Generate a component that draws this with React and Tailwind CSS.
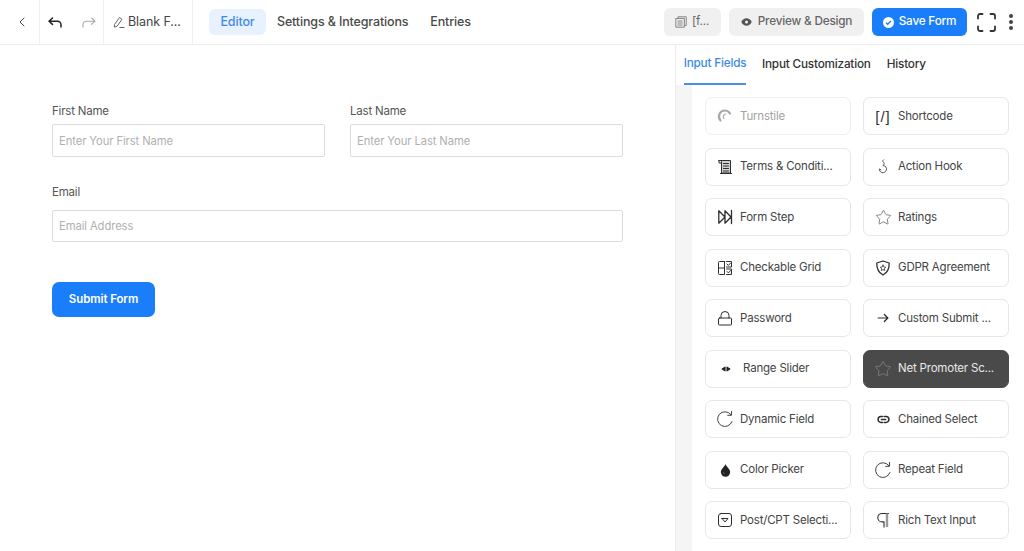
import React from "react";
import { ChevronLeft, Star } from "lucide-react";

const S = ({ children, size = 18, className = "", sw = 1.2 }) => (
  <svg width={size} height={size} viewBox="0 0 18 18" fill="none" stroke="currentColor" strokeWidth={sw} strokeLinecap="round" strokeLinejoin="round" className={className}>{children}</svg>
);

const TurnstileIcon = () => (
  <S sw={2.2}><path d="M4.500 13.500A6 6 0 0 1 9 3.500c2.200 0 3.900 1.100 5 3" /><path d="M7.800 11.500A3 3 0 0 1 9.500 7" strokeWidth="1.200" /></S>
);
const ShortcodeIcon = () => (
  <span className="text-[15px] leading-none tracking-[1px] text-[#333] font-['Liberation_Sans',sans-serif]">[/]</span>
);
const TermsIcon = () => (
  <S sw={1}><path d="M3 2.500h11.500v12.500H5.500V4c0-.8-.6-1.500-1.400-1.500H3Z" fill="#d0d0d0" /><path d="M3 2.500V5h2.500M4.500 15.500h11M7.500 5.500h5M7.500 8h5M7.500 10.500h5M7.500 13h5" /></S>
);
const HookIcon = () => (
  <S sw={1} className="text-[#555]"><path d="M9.500 1.800c-1 .9-1 1.700 0 2.500s.8 2-.2 3" /><path d="M9.300 7.500c2.600.7 3.800 2.400 3.100 4.500-.6 2-2.700 3.200-4.700 2.500-1.700-.6-2.500-2-2.100-3.600l1.300 1" /></S>
);
const StepIcon = () => (
  <S sw={1.300}><path d="M2.800 2.800v12.400L9 9 2.800 2.800ZM9 2.800v12.400L15 9 9 2.800ZM15.500 2.500v13" /></S>
);
const GridIcon = () => (
  <S sw={1}><path d="M8.500 2.500H3.500a1 1 0 0 0-1 1v11a1 1 0 0 0 1 1h5v-13ZM2.500 9h6" /><path d="M10.500 2.500h5v5.500h-5M10.500 10h5v5.500h-5M11 5l1.400 1.400 2.200-2.400M11 12.500l1.400 1.400 2.200-2.400" /></S>
);
const RangeIcon = () => (
  <S><path d="M8 7.200 5.200 9 8 10.800Z M10 7.200 12.800 9 10 10.800Z" fill="#222" stroke="#222" /></S>
);
const ShieldIcon = () => (
  <S sw={1.300}><path d="M9 2 15.200 4c.2 5.500-1.500 9.500-6.200 12C4.300 13.500 2.600 9.500 2.800 4L9 2Z" /><path d="M9 6.200 9.900 8l1.900.3-1.400 1.300.3 1.900L9 10.600l-1.700.9.300-1.900-1.400-1.300L8.100 8 9 6.200Z" strokeWidth=".8" /></S>
);
const LockIcon = () => (
  <S sw={1}><rect x="2.500" y="9" width="13" height="7" rx="1" /><path d="M5 9V6.500a4 4 0 0 1 8 0V9" /></S>
);
const ArrowIcon = () => (
  <S sw={1.400} size={16}><path d="M3.500 9h11M10.500 5l4 4-4 4" /></S>
);
const RepeatIcon = ({ size = 18 }) => (
  <S size={size} sw={.9}><path d="M14.800 4.500A7.400 7.400 0 1 0 16 11.500" /><path d="M15.500 1.500v3.800h-3.800" /></S>
);
const LinkIcon = () => (
  <S size={15} sw={1.800}><path d="M8 5.500H6a3.500 3.500 0 0 0 0 7h2M10 5.500h2a3.500 3.500 0 0 1 0 7h-2M6.500 9h5" /></S>
);
const DropIcon = () => (
  <svg width="11" height="14" viewBox="0 0 13 16"><path d="M6.500 1C7 4 12 6.500 12 10.500A5.500 5.500 0 0 1 1 10.500C1 6.500 6 4 6.500 1Z" fill="#222" /><path d="M4 10.500c0 1.200.7 2 1.700 2.300" stroke="#777" strokeWidth=".8" fill="none" /></svg>
);
const PostIcon = () => (
  <S sw={1}><rect x="2.500" y="2.500" width="13" height="13" rx="2.500" /><path d="M6 7.500h6L9 11 6 7.500Z" /></S>
);
const RichIcon = () => (
  <S sw={1.100}><path d="M14.500 2.500H8a4.200 4.200 0 0 0 0 8.400h2V16" /><path d="M13 2.500V16" stroke="#999" strokeWidth="2.400" strokeLinecap="butt" /></S>
);

const fields = [
  [TurnstileIcon, "Turnstile", "dim"],
  [ShortcodeIcon, "Shortcode"],
  [TermsIcon, "Terms & Conditi..."],
  [HookIcon, "Action Hook"],
  [StepIcon, "Form Step"],
  [() => <Star size={17} strokeWidth={1} className="text-[#555]" />, "Ratings"],
  [GridIcon, "Checkable Grid"],
  [ShieldIcon, "GDPR Agreement"],
  [LockIcon, "Password"],
  [ArrowIcon, "Custom Submit ..."],
  [RangeIcon, "Range Slider", "range"],
  [() => <Star size={18} strokeWidth={1} className="text-[#8a8a8a]" />, "Net Promoter Sc...", "active"],
  [RepeatIcon, "Dynamic Field"],
  [LinkIcon, "Chained Select"],
  [DropIcon, "Color Picker"],
  [RepeatIcon, "Repeat Field"],
  [PostIcon, "Post/CPT Selecti..."],
  [RichIcon, "Rich Text Input"],
];

function Card({ Icon, label, mode }) {
  const base = "flex items-center h-[38px] rounded-[7px] text-[11.5px] tracking-[-0.2px] pl-[10px] pr-2 whitespace-nowrap overflow-hidden";
  const tone = mode === "active"
    ? "bg-[#4a4a4a] text-[#e8e8e8] border border-[#4a4a4a]"
    : mode === "dim"
      ? "bg-white border border-[#eeeeee] text-[#a3a3a3]"
      : "bg-white border border-[#e6e6e6] text-[#444444]";
  return (
    <div className={`${base} ${tone}`}>
      <span className={`flex items-center justify-center w-[18px] shrink-0 mr-[6px] ${mode === "range" ? "ml-[1px]" : ""} ${mode === "dim" ? "text-[#a8a8a8]" : mode === "active" ? "" : "text-[#2f2f2f]"}`}>
        <Icon />
      </span>
      <span className={`pt-[1px] ${mode === "range" ? "ml-[2px]" : ""}`}>{label}</span>
    </div>
  );
}

function Input({ placeholder, h = "h-[33px]" }) {
  return (
    <div className={`${h} flex items-center border border-[#dcdcdc] rounded-[2px] bg-white px-[6px] pt-[1px] text-[11.25px] tracking-[-0.1px] text-[#b0b0b0]`}>{placeholder}</div>
  );
}

export default function App() {
  return (
    <div className="w-[1024px] h-[551px] overflow-hidden bg-white flex flex-col font-['Inter','Liberation_Sans',sans-serif]">
      <header className="h-[45px] shrink-0 border-b border-[#ececec] flex items-stretch">
        <div className="w-[40px] border-r border-[#f0f0f0] flex items-center justify-center text-[#444]"><ChevronLeft size={16} strokeWidth={1.5} className="ml-[4px]" /></div>
        <div className="w-[64px] border-r border-[#f0f0f0] flex items-center pl-[8px] gap-[20px]">
          <svg width="14" height="11" viewBox="0 0 14 11" fill="none" stroke="#222" strokeWidth="1.500" strokeLinecap="round" strokeLinejoin="round"><path d="M4.500 1 1 4.200l3.500 3.200M1 4.200h8.500a3.500 3.500 0 0 1 3.500 3.500V10" /></svg>
          <svg width="14" height="11" viewBox="0 0 14 11" fill="none" stroke="#aaa" strokeWidth="1.100" strokeLinecap="round" strokeLinejoin="round"><path d="M9.500 1 13 4.200 9.500 7.400M13 4.200H4.500A3.500 3.500 0 0 0 1 7.700V10" /></svg>
        </div>
        <div className="w-[89px] border-r border-[#f0f0f0] flex items-center pl-[9px] gap-[3px] text-[12.5px] tracking-[-0.1px] text-[#444] whitespace-nowrap">
          <svg width="12" height="13" viewBox="0 0 12 13" fill="none" stroke="#555" strokeWidth="0.9"><path d="M1.500 8.500 6.500 1.500l2.500 1.800-5 7-2.700.8.200-2.600Z" /><path d="M6.500 11.500h5" /></svg>
          <span>Blank F...</span>
        </div>
        <nav className="flex items-center pl-[16px] text-[12.5px] tracking-[-0.15px] font-medium text-[#4a4a4a]">
          <span className="h-[26px] w-[57px] flex items-center justify-center rounded-[6px] bg-[#e8f2ff] text-[#3d8ae6]">Editor</span>
          <span className="ml-[11px]">Settings &amp; Integrations</span>
          <span className="ml-[22px]">Entries</span>
        </nav>
        <div className="ml-auto flex items-center text-[11.75px] tracking-[-0.2px] text-[#555]">
          <div className="h-[28px] w-[57px] rounded-[6px] bg-[#f0f0f0] flex items-center pl-[11px] gap-[5px]">
            <svg width="12" height="12" viewBox="0 0 12 12" fill="none" stroke="#777" strokeWidth="0.9"><path d="M3 2.500V.8h8.200v8.700H9.500M.8 2.500h8.500v8.700H.8ZM2.500 5h5M2.500 7h5M2.500 9h5" /></svg>
            <span className="text-[#666]">[f...</span>
          </div>
          <div className="ml-[8px] h-[28px] w-[135px] rounded-[6px] bg-[#f0f0f0] flex items-center justify-center gap-[6px] font-medium text-[#666]">
            <svg width="11" height="8" viewBox="0 0 11 8"><path d="M.3 4C1.500 1.500 3.300.3 5.500.3S9.500 1.500 10.700 4C9.500 6.500 7.700 7.700 5.500 7.700S1.500 6.500.3 4Z" fill="#555" /><circle cx="5.500" cy="4" r="1.500" fill="#f0f0f0" /></svg>
            <span>Preview &amp; Design</span>
          </div>
          <div className="ml-[8px] h-[28px] w-[95px] rounded-[6px] bg-[#1a7efb] flex items-center justify-center gap-[5px] text-white font-medium">
            <svg width="11" height="11" viewBox="0 0 12 12"><circle cx="6" cy="6" r="6" fill="#fff" /><path d="M3.300 6.200 5.200 8l3.500-3.800" fill="none" stroke="#1a7efb" strokeWidth="1.500" /></svg>
            <span>Save Form</span>
          </div>
          <svg className="ml-[10px]" width="19" height="19" viewBox="0 0 19 19" fill="none" stroke="#333" strokeWidth="1.800" strokeLinecap="round"><path d="M1 5.500V3a2 2 0 0 1 2-2h2.500M13.500 1H16a2 2 0 0 1 2 2v2.500M18 13.500V16a2 2 0 0 1-2 2h-2.500M5.500 18H3a2 2 0 0 1-2-2v-2.500" /></svg>
          <div className="ml-[13px] mr-[11px] flex flex-col gap-[2px]">
            <span className="w-[4px] h-[4px] rounded-full bg-[#444]" />
            <span className="w-[4px] h-[4px] rounded-full bg-[#444]" />
            <span className="w-[4px] h-[4px] rounded-full bg-[#444]" />
          </div>
        </div>
      </header>
      <div className="flex flex-1 min-h-0">
        <main className="w-[675px] shrink-0 pl-[52px] pt-[59px]">
          <div className="w-[571px] text-[11.5px] tracking-[-0.2px] text-[#555]">
            <div className="grid grid-cols-2 gap-x-[25px]">
              <div>
                <div className="leading-[15px] mb-[5px]">First Name</div>
                <Input placeholder="Enter Your First Name" />
              </div>
              <div>
                <div className="leading-[15px] mb-[5px]">Last Name</div>
                <Input placeholder="Enter Your Last Name" />
              </div>
            </div>
            <div className="mt-[28px] leading-[15px] mb-[10px]">Email</div>
            <Input placeholder="Email Address" h="h-[32px]" />
            <button className="mt-[40px] w-[103px] h-[35px] rounded-[7px] bg-[#1a7efb] text-white text-[11.5px] tracking-[-0.1px] font-semibold">Submit Form</button>
          </div>
        </main>
        <aside className="flex-1 border-l border-[#ececec] flex flex-col min-w-0">
          <div className="h-[40px] shrink-0 flex pl-[8px] gap-[16px] text-[11.75px] tracking-[-0.2px] font-medium text-[#333]">
            <span className="h-full w-[62px] flex items-center justify-center border-b-2 border-[#4a90e2] text-[#3d8ae6] whitespace-nowrap">Input Fields</span>
            <span className="flex items-center">Input Customization</span>
            <span className="flex items-center">History</span>
          </div>
          <div className="flex-1 flex min-h-0">
            <div className="w-[16px] shrink-0 bg-[#f5f5f5]" />
            <div className="flex-1 pl-[13px] pr-[15px] pt-[12px] grid grid-cols-2 gap-x-[12px] gap-y-[12.5px] content-start">
              {fields.map(([Icon, label, mode]) => <Card key={label} Icon={Icon} label={label} mode={mode} />)}
            </div>
          </div>
        </aside>
      </div>
    </div>
  );
}
